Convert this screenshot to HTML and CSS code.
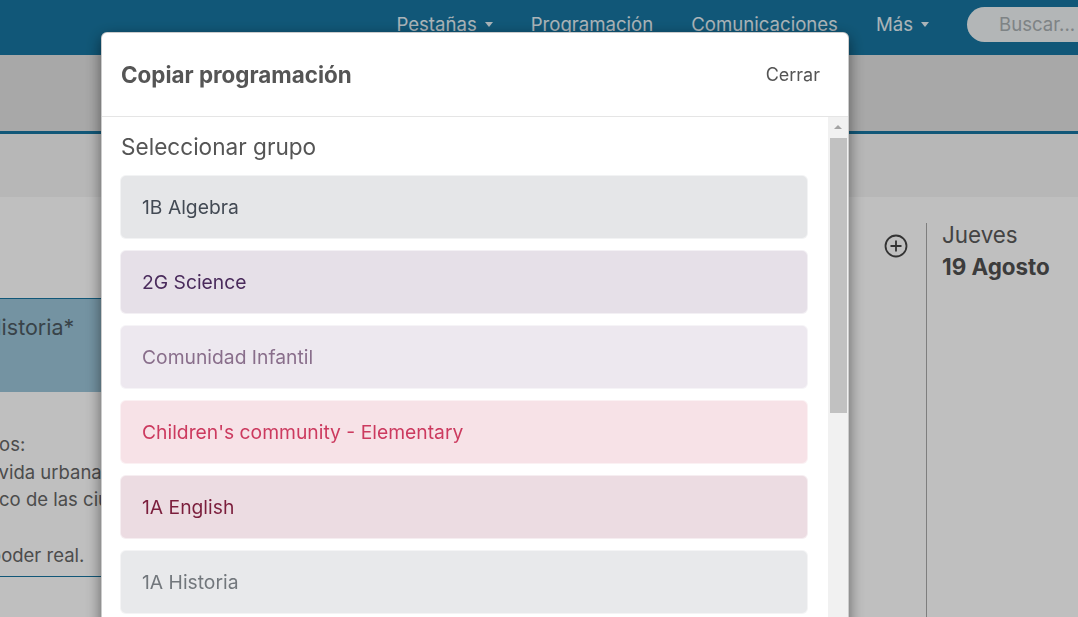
FILE: index.html
```html
<!DOCTYPE html>
<html lang="es">
<head>
    <meta charset="UTF-8">
    <meta name="viewport" content="width=device-width, initial-scale=1.0">
    <title>Programación</title>
    <link rel="stylesheet" href="styles.css">
</head>
<body>
    <header class="navbar">
        <nav class="nav-links">
            <a href="#">Pestañas <span class="caret"></span></a>
            <a href="#">Programación</a>
            <a href="#">Comunicaciones</a>
            <a href="#">Más <span class="caret"></span></a>
        </nav>
        <div class="search">Buscar...</div>
    </header>

    <div class="subbar"></div>
    <div class="toolbar"></div>

    <main class="week">
        <section class="day-col">
            <div class="day-head">
                <svg class="add-icon" viewBox="0 0 24 24" width="24" height="24">
                    <circle cx="12" cy="12" r="10.5" fill="none" stroke="currentColor" stroke-width="1.8"/>
                    <path d="M12 6.5v11M6.5 12h11" stroke="currentColor" stroke-width="1.8" fill="none"/>
                </svg>
            </div>
            <div class="lesson">
                <div class="lesson-head">1A Historia*</div>
                <div class="lesson-body">
                    Grupos:<br>
                    Vi la vida urbana de Roma antigua<br>
                    Público de las ciudades del imperio<br>
                    <br>
                    Del poder real.
                </div>
            </div>
        </section>
        <section class="day-col next">
            <div class="day-name">Jueves</div>
            <div class="day-date">19 Agosto</div>
        </section>
    </main>

    <div class="backdrop"></div>

    <div class="modal-wrap">
        <div class="modal">
            <div class="modal-header">
                <h4 class="modal-title">Copiar programación</h4>
                <a href="#" class="close-link">Cerrar</a>
            </div>
            <div class="modal-body">
                <div class="modal-list">
                    <h3 class="select-title">Seleccionar grupo</h3>
                    <div class="group gray">1B Algebra</div>
                    <div class="group violet">2G Science</div>
                    <div class="group lilac">Comunidad Infantil</div>
                    <div class="group rose">Children's community - Elementary</div>
                    <div class="group wine">1A English</div>
                    <div class="group slate">1A Historia</div>
                    <div class="group gray">2A Geografía</div>
                    <div class="group violet">3B Física</div>
                </div>
                <div class="scrollbar">
                    <div class="scroll-up"></div>
                    <div class="scroll-thumb"></div>
                </div>
            </div>
        </div>
    </div>
</body>
</html>
```

FILE: styles.css
```css
html, body {
    height: 100%;
}

body {
    margin: 0;
    overflow: hidden;
    font-family: Inter, "Noto Sans", sans-serif;
    background: white;
    color: #555;
}

a {
    color: inherit;
    text-decoration: none;
}

/* top bar */
.navbar {
    height: 55px;
    box-sizing: border-box;
    padding-bottom: 7px;
    background: #1775a0;
    display: flex;
    align-items: center;
    justify-content: flex-end;
    overflow: hidden;
}

.nav-links {
    display: flex;
    gap: 38px;
    margin-right: 38px;
    font-size: 18.6px;
}

.nav-links a {
    color: #e4f0f6;
    display: flex;
    align-items: center;
}

.caret {
    display: inline-block;
    width: 0;
    height: 0;
    margin-left: 8px;
    border-top: 5px solid #e4f0f6;
    border-left: 4.5px solid transparent;
    border-right: 4.5px solid transparent;
}

.search {
    flex: 0 0 auto;
    width: 150px;
    height: 35px;
    margin-right: -39px;
    box-sizing: border-box;
    padding-left: 32px;
    border-radius: 18px;
    background: #eff3f4;
    color: #a9afb2;
    font-size: 18.6px;
    line-height: 35px;
}

.subbar {
    height: 76px;
    background: #e0e0e0;
    border-bottom: 3px solid #1775a0;
}

.toolbar {
    height: 63px;
    background: #f5f5f5;
}

/* calendar */
.week {
    display: flex;
    margin-left: -60px;
    margin-top: 26px;
    height: calc(100vh - 223px);
}

.day-col {
    flex: 0 0 986px;
}

.day-col.next {
    flex: 1;
    border-left: 1px solid #a8a8a8;
    padding-left: 15px;
}

.day-head {
    height: 75px;
    display: flex;
    justify-content: flex-end;
    align-items: flex-start;
    padding-right: 18px;
    box-sizing: border-box;
}

.add-icon {
    margin-top: 11px;
    color: #444;
}

.lesson {
    margin-right: 160px;
    border-top: 1px solid #1775a0;
    border-bottom: 1px solid #1775a0;
}

.lesson-head {
    height: 93px;
    box-sizing: border-box;
    padding: 15px 16px;
    background: #9bc5d9;
    color: #4c5a62;
    font-size: 21.5px;
    line-height: 26px;
}

.lesson-body {
    padding: 39px 16px 6px;
    font-size: 18.5px;
    line-height: 27.7px;
    color: #666;
}

.day-name {
    font-size: 22.4px;
    line-height: 24px;
    color: #5a5a5a;
}

.day-date {
    margin-top: 7px;
    font-size: 22.4px;
    line-height: 26px;
    font-weight: 700;
    color: #505050;
}

/* modal */
.backdrop {
    position: fixed;
    inset: 0;
    background: rgba(0, 0, 0, 0.25);
}

.modal-wrap {
    position: fixed;
    inset: 0;
    padding: 32px 0 0 101px;
}

.modal {
    width: 748px;
    box-sizing: border-box;
    background: white;
    border: 1px solid rgba(0, 0, 0, 0.2);
    border-radius: 6px;
    box-shadow: 0 5px 15px rgba(0, 0, 0, 0.5);
}

.modal-header {
    height: 84px;
    box-sizing: border-box;
    padding: 0 28px 0 19px;
    display: flex;
    align-items: center;
    justify-content: space-between;
    border-bottom: 1px solid #e5e5e5;
}

.modal-title {
    margin: 0;
    font-size: 22.4px;
    font-weight: 700;
    color: #555;
}

.close-link {
    font-size: 18px;
    color: #555;
}

.modal-body {
    height: 560px;
    display: flex;
    overflow: hidden;
}

.modal-list {
    flex: 1;
    padding: 16px 20px 20px 18px;
}

.scrollbar {
    flex: 0 0 20px;
    background: #f1f1f1;
}

.scroll-up {
    height: 19px;
    display: flex;
    justify-content: center;
    align-items: center;
}

.scroll-up::before {
    content: "";
    width: 0;
    height: 0;
    border-bottom: 4px solid #a3a3a3;
    border-left: 4px solid transparent;
    border-right: 4px solid transparent;
}

.scroll-thumb {
    height: 275px;
    margin: 2px 1px 0 2px;
    background: #c1c1c1;
}

.select-title {
    margin: 0 0 14px 1px;
    font-size: 22.6px;
    line-height: 28px;
    font-weight: 400;
    color: #555;
}

.group {
    margin-bottom: 11px;
    padding: 20px 21px;
    border: 1px solid rgba(255, 255, 255, 0.5);
    border-radius: 6px;
    font-size: 19.3px;
    line-height: 22px;
}

.group.gray { background: #e5e6e8; color: #434a54; }
.group.violet { background: #e6e0e8; color: #4a2b5c; }
.group.lilac { background: #ede8ef; color: #896e8b; }
.group.rose { background: #f7e2e7; color: #cc3a5f; }
.group.wine { background: #ecdce2; color: #7b1e3c; }
.group.slate { background: #e8e9eb; color: #72777c; }
```
